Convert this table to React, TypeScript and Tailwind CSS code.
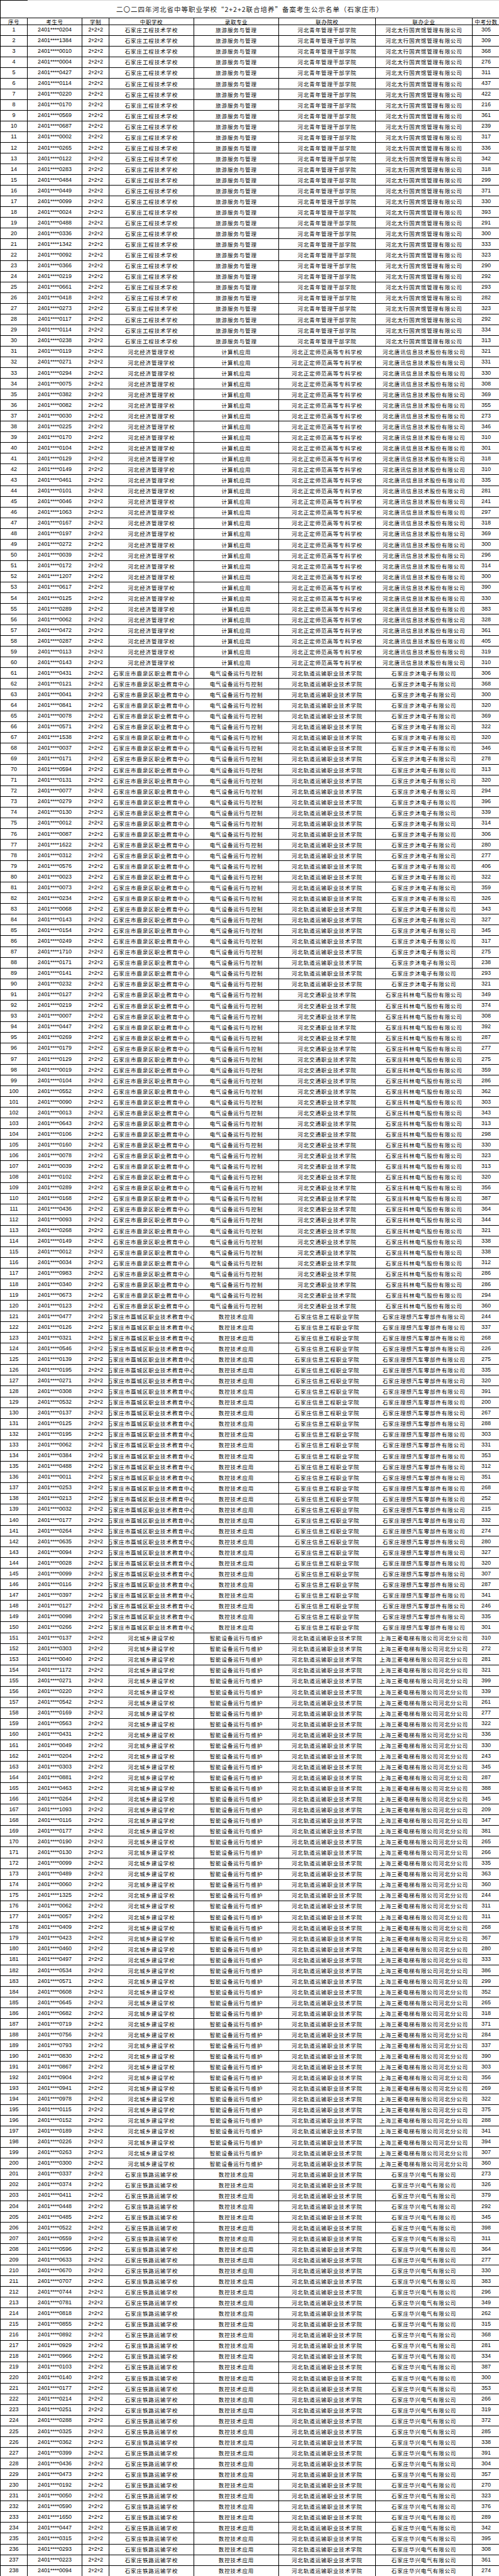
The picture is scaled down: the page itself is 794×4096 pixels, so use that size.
import React from 'react';

const cols = 'grid grid-cols-[43px_87px_43px_135px_135px_154px_154px_43px]';

const groups = [
  { to: 30, school: '石家庄工程技术学校', major: '旅游服务与管理', college: '河北青年管理干部学院', company: '河北太行国宾馆管理有限公司' },
  { to: 60, school: '河北经济管理学校', major: '计算机应用', college: '河北正定师范高等专科学校', company: '河北唐讯信息技术股份有限公司' },
  { to: 90, school: '石家庄市鹿泉区职业教育中心', major: '电气设备运行与控制', college: '河北轨道运输职业技术学院', company: '石家庄步沐电子有限公司' },
  { to: 120, school: '石家庄市鹿泉区职业教育中心', major: '电气设备运行与控制', college: '河北交通职业技术学院', company: '石家庄科林电气股份有限公司' },
  { to: 150, school: '石家庄市藁城区职业技术教育中心', major: '数控技术应用', college: '石家庄信息工程职业学院', company: '石家庄理想汽车零部件有限公司' },
  { to: 200, school: '河北城乡建设学校', major: '智能设备运行与维护', college: '河北轨道运输职业技术学院', company: '上海三菱电梯有限公司河北分公司' },
  { to: 238, school: '石家庄铁路运输学校', major: '数控技术应用', college: '河北轨道运输职业技术学院', company: '石家庄华兴电气有限公司' },
];

const ids = `0204 1384 0010 0004 0427 0114 0220 0170 0569 0687 0002 0265 0122 0283 0484 0449 0099 0024 0488 0336
1342 0092 0366 0219 0661 0418 0273 0117 0114 0238 0119 0271 0294 0075 0382 0082 0030 0225 0170 0104
0129 0149 0461 0101 0046 1063 0167 0197 0272 0039 0172 1207 0617 0125 0289 0062 0472 0287 0113 0143
0431 0121 0041 0841 0078 0571 1538 0037 0171 0594 0131 0077 0279 0130 0012 0087 1622 0312 0576 0023
0073 0234 0068 0143 0154 0249 1710 0171 0141 0232 0127 0219 0007 0447 0269 0179 0129 0019 0104 0552
0090 0013 0643 0106 0160 0078 0039 0102 0289 0168 0436 0093 0268 0149 0012 0034 0983 0340 0673 0123
0477 0126 0321 0546 0139 0195 0271 0308 0532 0137 0125 0195 0062 0384 0488 0011 0253 0213 0032 0177
0264 0635 0094 0028 0099 0116 0397 0127 0098 0266 0137 0303 0040 1172 0271 0220 0542 0169 0563 0431
0049 0204 0303 0881 0463 0264 1093 0116 0177 0190 0130 0099 0489 0060 1325 0062 0057 0409`
  .trim()
  .split(/\s+/);

const scores = `305 309 368 276 311 437 422 216 361 239 317 336 342 318 299 371 330 393 291 300
333 323 290 292 293 282 323 292 334 313 321 331 330 308 369 355 273 346 310 301
318 310 335 281 241 297 318 369 300 296 314 300 390 330 383 328 361 405 319 310
306 368 300 320 369 322 320 346 278 313 320 294 396 339 314 306 280 277 406 322
359 326 343 327 345 317 275 238 293 321 349 374 308 392 287 277 275 359 286 362
303 343 313 298 330 323 313 320 356 387 364 344 321 338 338 312 286 286 294 360
244 337 268 226 275 335 320 391 200 267 288 303 331 353 312 351 268 252 215 332
274 280 327 320 307 287 341 246 335 301 310 272 281 321 399 339 261 277 322 336
330 243 345 287 388 345 209 347 381 265 266 335 363 360 244 311 311 268`
  .trim()
  .split(/\s+/);

const tailIds = ['0192', '0050', '0590', '1650', '0447', '0315', '0293', '0223', '0094'];

const rows = Array.from({ length: 238 }, (_, i) => {
  const n = i + 1;
  const g = groups.find((x) => n <= x.to)!;
  let id = ids[i];
  if (!id) id = n >= 230 ? tailIds[n - 230] : String(100 + ((n * 37) % 900)).padStart(4, '0');
  const score = scores[i] ?? String(260 + ((n * 53) % 140));
  return { n, id, score, ...g };
});

const cell = 'flex items-center justify-center overflow-hidden whitespace-nowrap border-r border-black';
const cjk = "font-['Noto_Sans_CJK_SC',sans-serif] text-[8.5px] tracking-[0.9px] leading-none";
const num = "font-['Liberation_Sans','Noto_Sans_CJK_SC',sans-serif] text-[9px] leading-none";

export default function App() {
  return (
    <div className="w-[794px] bg-white text-black">
      {/* title */}
      <div className="relative h-[27.5px] border-l border-black">
        <div className="absolute left-0 top-0 h-px w-[43px] bg-black" />
        <div className="absolute left-[43px] right-0 top-0 h-px bg-[#d4d4d4]" />
        <div className="flex h-full items-center justify-center pt-[2px]">
          <span className="font-['Noto_Sans_CJK_SC',sans-serif] text-[10.5px] tracking-[1px] leading-none text-[#222]">
            二〇二四年河北省中等职业学校“2+2+2联合培养”备案考生公示名单（石家庄市）
          </span>
        </div>
      </div>

      <div className="border-l border-t border-black">
        {/* header */}
        <div className={`${cols} h-[11px] border-b border-black`}>
          {['序号', '考生号', '学制', '中职学校', '录取专业', '联办院校', '联办企业', '中考分数'].map((h, i) => (
            <div
              key={h}
              className={`flex items-center justify-center whitespace-nowrap border-r border-black font-['Noto_Sans_CJK_SC',sans-serif] text-[8.5px] tracking-[0.6px] leading-[10px] ${i === 7 ? 'border-r-0' : ''}`}
            >
              {h}
            </div>
          ))}
        </div>

        {rows.map((r) => (
          <div key={r.n} className={`${cols} h-[17.05px] border-b border-black`}>
            <div className={`${cell} ${num}`}>{r.n}</div>
            <div className={`${cell} ${num}`}>2401****{r.id}</div>
            <div className={`${cell} ${num} tracking-[-0.5px]`}>2+2+2</div>
            <div className={`${cell} ${cjk}`}>{r.school}</div>
            <div className={`${cell} ${cjk}`}>{r.major}</div>
            <div className={`${cell} ${cjk}`}>{r.college}</div>
            <div className={`${cell} ${cjk}`}>{r.company}</div>
            <div className={`${cell} ${num} border-r-0`}>{r.score}</div>
          </div>
        ))}
      </div>
    </div>
  );
}
